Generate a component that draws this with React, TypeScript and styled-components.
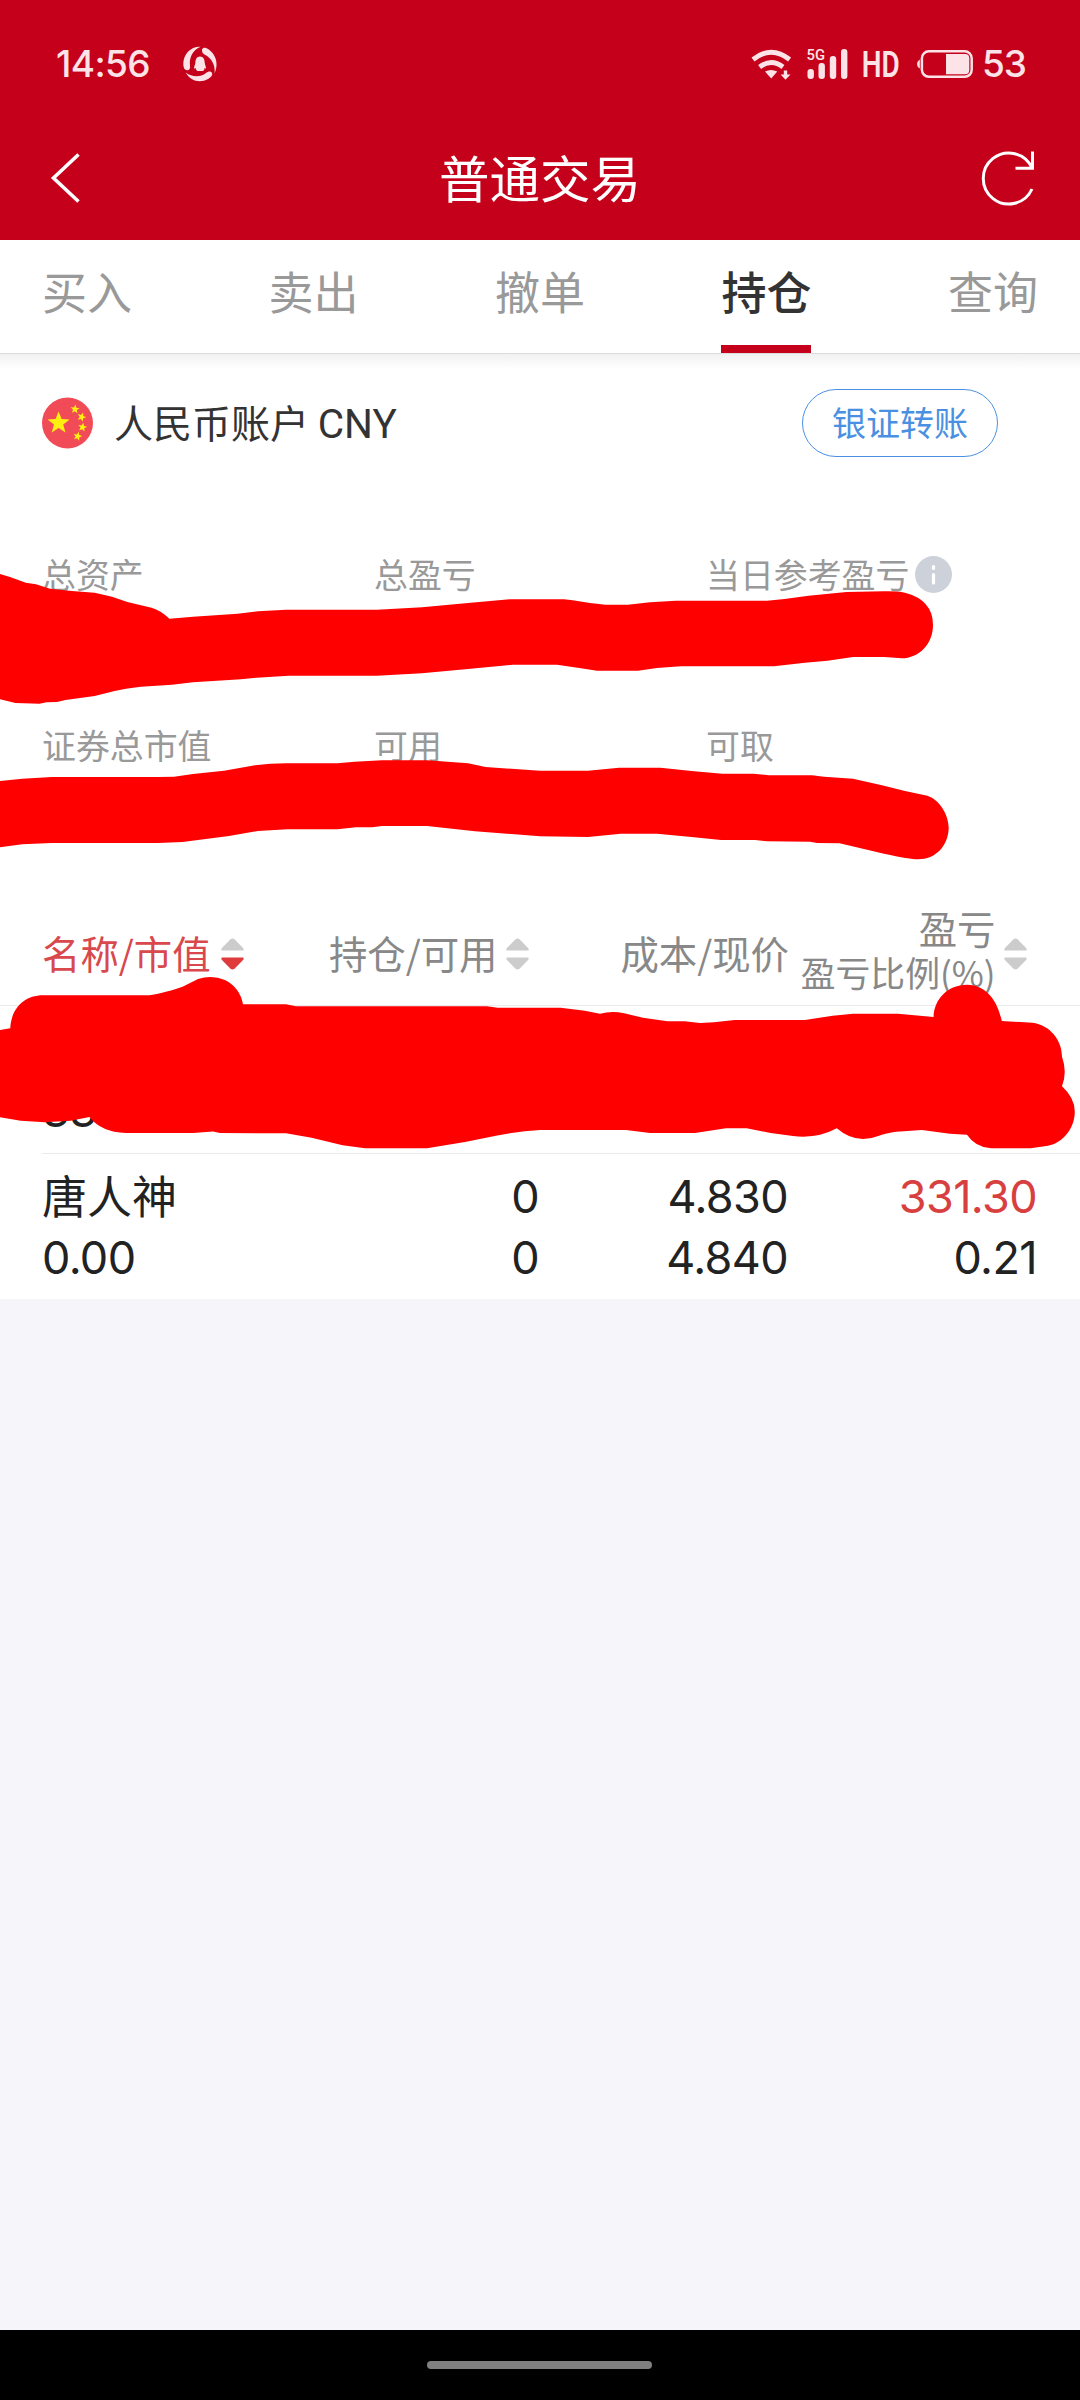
import React from 'react';
import styled, { createGlobalStyle } from 'styled-components';

const cjk = '"Noto Sans CJK SC", sans-serif';
const digits = 'Inter, "Noto Sans CJK SC", sans-serif';

const GlobalStyle = createGlobalStyle`
  * { box-sizing: border-box; }
  html, body { margin: 0; padding: 0; background: #f5f5fa; }
`;

const Screen = styled.div`
  position: relative;
  display: flex;
  flex-direction: column;
  width: 1080px;
  height: 2400px;
  overflow: hidden;
  background: #f5f5fa;
  font-family: ${cjk};
  color: #222;
  white-space: nowrap;
`;

const Header = styled.header`
  height: 240px;
  background: #c4001a;
  color: #fff;
`;

const StatusBar = styled.div`
  display: flex;
  justify-content: space-between;
  height: 116px;
  padding: 12px 55px 0 56px;
  color: #fbe3e7;
  font-family: ${digits};
`;

const StatusGroup = styled.div`
  display: flex;
  align-items: center;
  height: 104px;
`;

const Clock = styled.span`
  width: 127px;
  font-size: 37px;
  line-height: 40px;
  font-weight: 500;
  letter-spacing: -0.6px;
`;

const BatteryLevel = styled.span`
  width: 43px;
  margin-left: 8px;
  font-size: 37px;
  line-height: 40px;
  font-weight: 500;
  letter-spacing: -1px;
`;

const StatusArt = styled.svg`
  display: block;
  flex: none;
  overflow: visible;
`;

const TitleBar = styled.div`
  display: grid;
  grid-template-columns: 100px 1fr 100px;
  align-items: center;
  height: 124px;
  padding: 0 42px;
`;

const Title = styled.h1`
  margin: 0;
  padding-bottom: 4px;
  text-align: center;
  font-size: 50.5px;
  line-height: 72px;
  font-weight: 400;
`;

const BarIcon = styled.svg<{ $end?: boolean }>`
  display: block;
  justify-self: ${(p) => (p.$end ? 'end' : 'start')};
`;

const Tabs = styled.nav`
  display: flex;
  justify-content: space-between;
  height: 114px;
  padding: 0 42px;
  background: #fff;
  border-bottom: 1px solid #dcdcdc;
`;

const Tab = styled.div<{ $active?: boolean }>`
  height: 113px;
  padding-top: 18px;
  font-size: 45px;
  line-height: 66px;
  font-weight: ${(p) => (p.$active ? 500 : 400)};
  color: ${(p) => (p.$active ? '#333' : '#999')};
  border-bottom: 8px solid ${(p) => (p.$active ? '#c4001a' : 'transparent')};
`;

const Account = styled.section`
  height: 546px;
  padding: 0 42px;
  background: linear-gradient(#f1f1f1, #fff 15px);
`;

const AccountHead = styled.div`
  display: flex;
  align-items: center;
  height: 138px;
`;

const AccountName = styled.span`
  flex: 1;
  margin-left: 20px;
  padding-bottom: 2px;
  font-size: 39px;
  line-height: 56px;
  color: #333;
`;

const Currency = styled.span`
  font-family: Roboto, sans-serif;
  font-size: 40.5px;
`;

const TransferButton = styled.button`
  width: 196px;
  height: 68px;
  margin: 0 40px 0 0;
  padding: 0 0 2px;
  border: 1.5px solid #4a90e2;
  border-radius: 34px;
  background: #fff;
  color: #4a90e2;
  font: 400 34px/60px ${cjk};
`;

const Stats = styled.div`
  display: grid;
  grid-template-columns: repeat(3, 332px);
  grid-auto-rows: 171px;
  padding-top: 57px;
`;

const StatLabel = styled.div`
  display: flex;
  align-items: center;
  height: 50px;
  font-size: 33.9px;
  line-height: 50px;
  color: #999;
`;

const InfoIcon = styled.svg`
  margin-left: 6px;
`;

const Table = styled.section`
  height: 399px;
  background: #fff;
`;

const TableHead = styled.div`
  display: grid;
  grid-template-columns: repeat(4, 249px);
  align-items: center;
  height: 106px;
  padding: 0 42px;
  border-bottom: 1px solid #ebebeb;
  color: #888;
`;

const HeadCell = styled.div<{ $start?: boolean; $inset?: number; $active?: boolean }>`
  display: flex;
  align-items: center;
  justify-content: ${(p) => (p.$start ? 'flex-start' : 'flex-end')};
  gap: ${(p) => (p.$start ? 10 : 8.5)}px;
  padding-right: ${(p) => p.$inset ?? 0}px;
  padding-top: 3px;
  font-size: 38.4px;
  line-height: 56px;
  color: ${(p) => (p.$active ? '#d8484c' : '#888')};
`;

const HeadLabel = styled.span`
  padding-bottom: 5px;
`;

const StackedLabel = styled.div`
  display: flex;
  flex-direction: column;
  align-items: flex-end;
  padding-bottom: 8px;
  line-height: 45px;
`;

const SmallLine = styled.span`
  font-size: 34.8px;
`;

const Row = styled.div`
  display: grid;
  grid-template-columns: repeat(4, 249px);
  grid-template-rows: 61px 61px;
  height: 147px;
  margin-left: 42px;
  padding-top: 12px;
  & + & { border-top: 1px solid #ebebeb; padding-top: 11px; }
`;

const Name = styled.div`
  font-size: 45px;
  line-height: 60px;
`;

const Num = styled.div<{ $start?: boolean; $up?: boolean }>`
  padding-right: 1px;
  text-align: ${(p) => (p.$start ? 'left' : 'right')};
  font-family: ${digits};
  font-size: 45px;
  line-height: 64px;
  letter-spacing: -0.6px;
  color: ${(p) => (p.$up ? '#d8403f' : '#222')};
`;

const Spacer = styled.div`
  flex: 1;
`;

const NavBar = styled.footer`
  display: flex;
  align-items: center;
  justify-content: center;
  height: 70px;
  padding-right: 1px;
  background: #000;
`;

const Handle = styled.div`
  width: 225px;
  height: 8px;
  border-radius: 4px;
  background: #808080;
`;

const Marker = styled.svg`
  position: absolute;
  left: 0;
  top: 0;
  pointer-events: none;
`;

function SortArrows({ down = false }: { down?: boolean }) {
  return (
    <svg width="23" height="32" viewBox="0 0 23 32">
      <path d="M9.5 1.2Q11.5-.4 13.5 1.2L22.3 10.3Q23.4 12.5 21.5 12.6H1.5Q-.4 12.5.7 10.3Z" fill="#ccc" />
      <path d="M9.5 30.8Q11.5 32.4 13.5 30.8L22.3 21.7Q23.4 19.5 21.5 19.4H1.5Q-.4 19.5.7 21.7Z" fill={down ? '#e03b3c' : '#ccc'} />
    </svg>
  );
}

function AppRing() {
  return (
    <StatusArt width="34" height="36" viewBox="0 0 34 36" fill="#fbe3e7">
      <path d="M17.5.7C8 .2 0 8 .3 18.5C.4 22 1.7 24.2 4 24.2C6.5 24.2 7.5 22.5 7 19.5C6 12 9.5 4 17.5 .7Z" />
      <path d="M19 4.8C18.6 2.5 20.4 1 23 2C32 6 36.5 17 31.6 27.5C32.5 20 29 12 21.5 8.5C20 7.8 19.2 6.7 19 4.8Z" />
      <path d="M2.8 26.5C9 31.5 17.5 31.5 23 27C25.5 25 28 25 29 27C30 29.5 27.5 31.5 25 33C17 37.5 7 35 2.8 26.5Z" />
      <path d="M17 10.500C13.800 10.500 12.400 13.300 12.400 16.500C12.400 18.500 11 20 11 22.800L12.700 22C12.600 23.200 13.500 24.300 14.500 25H20C21 24.300 21.600 23.200 21.500 22L23 22.800C23.100 20 21.700 18.500 21.700 16.500C21.700 13.300 20.200 10.500 17 10.500Z" />
    </StatusArt>
  );
}

function SystemIcons() {
  return (
    <StatusArt width="224" height="36" viewBox="750 45 224 36" fill="#fbe3e7">
      <g fill="none" stroke="#fbe3e7">
        <path d="M753 58.500Q771.300 44 789.600 58.500" strokeWidth="4.800" />
        <path d="M759.600 66Q771.300 57 783 66" strokeWidth="4.800" />
      </g>
      <path d="M765 70.500Q771 67.500 777.300 70.500L771.200 77.500Z" />
      <path d="M783.800 69.500H787.200V73.500H790.500L785.500 78.700L780.600 73.500H783.800Z" />
      <text x="806.500" y="59" fontFamily="Roboto, sans-serif" fontWeight="500" fontSize="15.500" textLength="18.500" lengthAdjust="spacingAndGlyphs">5G</text>
      <rect x="807.500" y="68" width="6.400" height="10" rx="3" />
      <rect x="818.500" y="62" width="6.400" height="16" rx="3" />
      <rect x="829.800" y="55" width="6.400" height="23" rx="3" />
      <rect x="841" y="48" width="6.400" height="30" rx="3" />
      <text x="861.800" y="76" fontFamily="Roboto, sans-serif" fontWeight="600" fontSize="36.500" textLength="38" lengthAdjust="spacingAndGlyphs">HD</text>
      <path d="M919.800 58.500Q917 60 917 63T919.800 67.500Z" />
      <rect x="921.900" y="50.300" width="49.800" height="25.500" rx="7" fill="none" stroke="#fbe3e7" strokeWidth="2.500" />
      <path d="M946 53H965Q969.300 53 969.300 57.300V69Q969.300 73.200 965 73.200H946Z" />
    </StatusArt>
  );
}

const STAR = '0,-10 2.6,-3.4 9.5,-3.1 4,1.3 5.9,8.1 0,4.3 -5.9,8.1 -4,1.3 -9.5,-3.1 -2.6,-3.4';

function Flag() {
  return (
    <svg width="52" height="52" viewBox="0 0 52 52">
      <circle cx="25.500" cy="26" r="25.500" fill="#f14b58" />
      <g fill="#fff010">
        <polygon points={STAR} transform="translate(16.600 26) scale(1.160)" />
        <polygon points={STAR} transform="translate(33 12.200) rotate(5) scale(.47)" />
        <polygon points={STAR} transform="translate(39.600 20) rotate(20) scale(.47)" />
        <polygon points={STAR} transform="translate(40.500 30.300) rotate(10) scale(.47)" />
        <polygon points={STAR} transform="translate(35.600 39.300) rotate(15) scale(.47)" />
      </g>
    </svg>
  );
}

const STROKE_ASSETS =
  'M0 574L10 577L25.800 582.700L36 584.300L50 588.700L72 591L94.700 592.700L112 596.700L127.400 602L151.500 607.700Q161 610.500 169.400 618.700L193 616.700L237.600 613.700L258 611.300L286 609.700H377L422 607.300L468 603L509.600 599.300H564L572.700 600.300L590 603L605.400 604.700H627.800L650 602.300L676 600.700H767L784.500 599L808.600 595.700L846.500 592L884 591.300Q897 591 905 592.700Q933 600 933 625C933 644 919 658.300 901.600 658.300L884 657H853L827.500 660.700L805 662.700L774 666.300H681L657 668L638 670.700H597L581 668.300L557 664.700H513L468 669L422 673.300L377 675.700H289L256.500 677.700L241 679.300L193 682.300L172 684.700L141 686.700Q125 688.500 113.600 691.300L94.700 696L65.400 700L57 702L46.500 702.300L39.600 703.700L15.500 703L0 699.300Z';

const STROKE_FUNDS =
  'M0 781L22.400 778.700L51.700 777H158L174 776.700L193 774L224 770.700L255 765.300Q270 763.300 286 763.300H337.500L354.700 761.700L382 760.300H427L468 763.300L485.500 767L540 770.700H588L619 767.700H660.500L691.500 771L722.500 773.700H753.500L769 775.300H812L824 776.700L853 778.700L884 785.700L905 791L927.400 795.700C940 800 948.700 815 948.700 828.300C948 846 936 859.300 918 859.300Q910 859.300 884 853.700L839.600 843.300L817 843L810 841.700L767 841.300L755 840H721L691.500 837L657 833.700H621L588 837L540 836.300L475 831.300L427 826H382L372 827.300H356L337.500 829.300H287.500L258 831L229 836L182.500 842L158 843H51.700L22.400 844.300L0 847.300Z';

const STROKE_HOLDING =
  'M0 1030L10.300 1028.300C11 1009 24 995.300 43 995.300H146Q158 995 182.500 986.700L198 979Q212 974.500 225.500 980.300Q240 988 243 1004.300H286L296 1006.300H487L497.600 1007.700H560.700L584.800 1010.700L600 1013.700Q612 1010.500 624 1013.300L643 1017.700L667.400 1021.300H684.600L700 1023L714 1022.300L734.600 1020H805L832.700 1015.700L853 1013.700H898L933.600 1017C934 999 948 984.700 967 984.700C988 985 998 1003 1001.800 1021L1032.400 1022.700C1050 1025 1062 1040 1062 1056.700Q1067.500 1072 1062 1086.300Q1074.800 1098 1074.800 1111.700C1074.800 1128 1063 1143 1048 1145.700L1030.700 1148.300H991Q975 1147 967 1134.700L949.800 1133.700L922 1130L896.400 1131.700Q886 1133 879 1135.700Q856 1145 836.800 1128.300Q817 1139 793 1136L770.700 1133L746.600 1128.300H726L695 1133H650L626 1130H540Q520 1131 496 1135.700L465 1142L427 1148.300H365L342.600 1145.300L311.600 1137.700L286 1133.300L220 1133L213 1131.500L193 1133H125.700Q101 1132 89.500 1117L70.600 1120.700L44.800 1122.300L20.700 1120.700L0 1117.300Z';

export default function App() {
  return (
    <>
      <GlobalStyle />
      <Screen>
        <Header>
          <StatusBar>
            <StatusGroup>
              <Clock>14:56</Clock>
              <AppRing />
            </StatusGroup>
            <StatusGroup>
              <SystemIcons />
              <BatteryLevel>53</BatteryLevel>
            </StatusGroup>
          </StatusBar>
          <TitleBar>
            <BarIcon width="50" height="56" viewBox="42.500 150 50 56" fill="none" stroke="#fff" strokeWidth="3.600">
              <path d="M79 154.500L54 178L79 201.500" />
            </BarIcon>
            <Title>普通交易</Title>
            <BarIcon $end width="60" height="60" viewBox="978 147.500 60 60" fill="none" stroke="#fff" strokeWidth="3">
              <path d="M1032 188.500A25.500 25.500 0 1 1 1032 167.500M1032.500 151V167.700H1015.500" />
            </BarIcon>
          </TitleBar>
        </Header>

        <Tabs>
          <Tab>买入</Tab>
          <Tab>卖出</Tab>
          <Tab>撤单</Tab>
          <Tab $active>持仓</Tab>
          <Tab>查询</Tab>
        </Tabs>

        <Account>
          <AccountHead>
            <Flag />
            <AccountName>
              人民币账户 <Currency>CNY</Currency>
            </AccountName>
            <TransferButton>银证转账</TransferButton>
          </AccountHead>
          <Stats>
            <StatLabel>总资产</StatLabel>
            <StatLabel>总盈亏</StatLabel>
            <StatLabel>
              当日参考盈亏
              <InfoIcon width="37" height="37" viewBox="0 0 37 37">
                <circle cx="18.500" cy="18.500" r="18.500" fill="#cdd2da" />
                <path d="M18.500 10.500V12.500M18.500 18.500V27" stroke="#fff" strokeWidth="3.200" strokeLinecap="round" />
              </InfoIcon>
            </StatLabel>
            <StatLabel>证券总市值</StatLabel>
            <StatLabel>可用</StatLabel>
            <StatLabel>可取</StatLabel>
          </Stats>
        </Account>

        <Table>
          <TableHead>
            <HeadCell $start $active>
              <HeadLabel>名称/市值</HeadLabel>
              <SortArrows down />
            </HeadCell>
            <HeadCell $inset={11}>
              <HeadLabel>持仓/可用</HeadLabel>
              <SortArrows />
            </HeadCell>
            <HeadCell>
              <HeadLabel>成本/现价</HeadLabel>
            </HeadCell>
            <HeadCell $inset={11}>
              <StackedLabel>
                <span>盈亏</span>
                <SmallLine>盈亏比例(%)</SmallLine>
              </StackedLabel>
              <SortArrows />
            </HeadCell>
          </TableHead>
          <Row>
            <Name />
            <Num />
            <Num />
            <Num />
            <Num $start>33</Num>
          </Row>
          <Row>
            <Name>唐人神</Name>
            <Num>0</Num>
            <Num>4.830</Num>
            <Num $up>331.30</Num>
            <Num $start>0.00</Num>
            <Num>0</Num>
            <Num>4.840</Num>
            <Num>0.21</Num>
          </Row>
        </Table>

        <Spacer />
        <NavBar>
          <Handle />
        </NavBar>

        <Marker width="1080" height="1200" viewBox="0 0 1080 1200" fill="#f00">
          <path d={STROKE_ASSETS} />
          <path d={STROKE_FUNDS} />
          <path d={STROKE_HOLDING} />
        </Marker>
      </Screen>
    </>
  );
}
